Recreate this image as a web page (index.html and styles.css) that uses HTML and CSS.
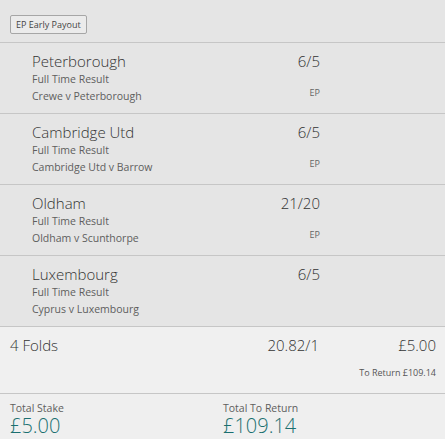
FILE: index.html
```html
<!DOCTYPE html>
<html lang="en">
<head>
    <meta charset="UTF-8">
    <title>Bet Slip</title>
    <link rel="stylesheet" href="styles.css">
</head>
<body>

<div class="slip">
    <div class="toolbar">
        <span class="ep-button">EP Early Payout</span>
    </div>

    <!-- Selections -->
    <div class="selection">
        <div class="sel-info">
            <div class="sel-name">Peterborough</div>
            <div class="sel-market">Full Time Result</div>
            <div class="sel-event">Crewe v Peterborough</div>
        </div>
        <div class="sel-odds">
            <div class="odds">6/5</div>
            <div class="ep">EP</div>
        </div>
    </div>
    <div class="selection">
        <div class="sel-info">
            <div class="sel-name">Cambridge Utd</div>
            <div class="sel-market">Full Time Result</div>
            <div class="sel-event">Cambridge Utd v Barrow</div>
        </div>
        <div class="sel-odds">
            <div class="odds">6/5</div>
            <div class="ep">EP</div>
        </div>
    </div>
    <div class="selection">
        <div class="sel-info">
            <div class="sel-name">Oldham</div>
            <div class="sel-market">Full Time Result</div>
            <div class="sel-event">Oldham v Scunthorpe</div>
        </div>
        <div class="sel-odds">
            <div class="odds">21/20</div>
            <div class="ep">EP</div>
        </div>
    </div>
    <div class="selection">
        <div class="sel-info">
            <div class="sel-name">Luxembourg</div>
            <div class="sel-market">Full Time Result</div>
            <div class="sel-event">Cyprus v Luxembourg</div>
        </div>
        <div class="sel-odds">
            <div class="odds">6/5</div>
        </div>
    </div>

    <!-- Bet type -->
    <div class="folds">
        <div class="folds-row">
            <span class="folds-name">4 Folds</span>
            <span class="folds-odds">20.82/1</span>
            <span class="folds-stake">&pound;5.00</span>
        </div>
        <div class="to-return">To Return &pound;109.14</div>
    </div>

    <!-- Totals -->
    <div class="totals">
        <div class="total">
            <div class="total-label">Total Stake</div>
            <div class="total-value">&pound;5.00</div>
        </div>
        <div class="total">
            <div class="total-label">Total To Return</div>
            <div class="total-value">&pound;109.14</div>
        </div>
    </div>
</div>

</body>
</html>
```

FILE: styles.css
```css
body {
    margin: 0;
    padding: 0;
    font-family: 'Open Sans', 'Noto Sans', sans-serif;
    color: #333;
    background-color: #efefef;
}

.slip {
    width: 445px;
}

.toolbar {
    background-color: #e5e5e5;
    padding: 11px 10px 0;
    height: 31px;
    border-bottom: 1px solid #c6c6c6;
}

.ep-button {
    display: inline-block;
    box-sizing: border-box;
    height: 19px;
    line-height: 17px;
    padding: 0 5px;
    font-size: 9px;
    color: #444;
    border: 1px solid #a6a6a6;
    border-radius: 2px;
    background-color: #ebebeb;
}

.selection {
    display: grid;
    grid-template-columns: 1fr 90px 125px;
    background-color: #e5e5e5;
    height: 70px;
    border-bottom: 1px solid #c6c6c6;
}

.sel-info {
    padding: 8px 0 0 32px;
}

.sel-name {
    font-size: 15px;
    font-weight: 300;
    line-height: 20px;
    color: #333;
}

.sel-market,
.sel-event {
    font-size: 10.5px;
    line-height: 16.5px;
    color: #5e5e5e;
}

.sel-odds {
    padding-top: 8px;
    text-align: right;
}

.odds {
    font-size: 15px;
    font-weight: 300;
    line-height: 20px;
    color: #333;
}

.ep {
    margin-top: 15px;
    font-size: 9px;
    color: #666;
}

.folds {
    background-color: #f0f0f0;
    height: 66px;
    border-bottom: 1px solid #c6c6c6;
    padding: 0 9px 0 10px;
}

.folds-row {
    display: grid;
    grid-template-columns: 1fr 100px 117px;
    padding-top: 8px;
    font-size: 15px;
    font-weight: 300;
    line-height: 20px;
}

.folds-odds,
.folds-stake {
    text-align: right;
}

.to-return {
    margin-top: 11px;
    text-align: right;
    font-size: 9px;
    color: #555;
}

.totals {
    display: grid;
    grid-template-columns: 213px 1fr;
    padding: 7px 10px 0;
}

.total-label {
    font-size: 10.5px;
    line-height: 14px;
    color: #5e5e5e;
}

.total-value {
    font-size: 20px;
    font-weight: 300;
    line-height: 22px;
    color: #1a6f70;
}
```
